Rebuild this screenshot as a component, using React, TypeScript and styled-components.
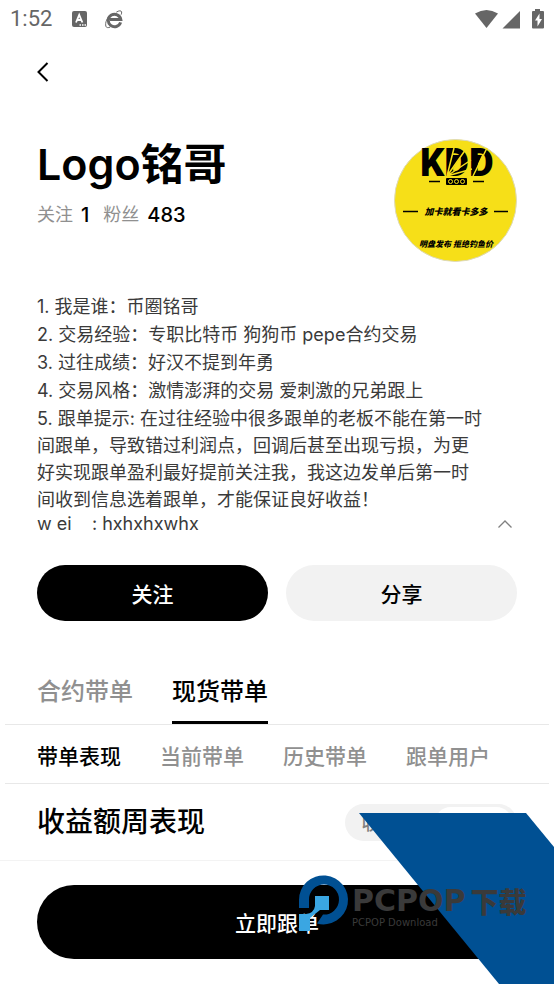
import React, { useState } from "react";
import styled, { createGlobalStyle } from "styled-components";

const GlobalStyle = createGlobalStyle`
  * { box-sizing: border-box; }
  body {
    margin: 0;
    background: #fff;
    color: #000;
    font-family: Inter, "Noto Sans CJK SC", sans-serif;
  }
  button { font: inherit; color: inherit; border: 0; padding: 0; background: none; cursor: pointer; }
  h1, h2, p { margin: 0; }
`;

const Page = styled.div`
  position: relative;
  display: flex;
  flex-direction: column;
  min-height: 100vh;
  overflow: hidden;
`;

const StatusBar = styled.header`
  display: flex;
  align-items: center;
  justify-content: space-between;
  height: 38px;
  padding: 0 9px 0 10px;
  color: #666;
`;

const StatusGroup = styled.div<{ $gap: number }>`
  display: flex;
  align-items: center;
  gap: ${(p) => p.$gap}px;
`;

const Clock = styled.time`
  font: 400 22px/26px Roboto, sans-serif;
`;

const NavBar = styled.nav`
  display: flex;
  align-items: center;
  height: 67px;
  padding: 0 31px;
`;

const BackButton = styled.button`
  display: grid;
  place-items: center;
  width: 24px;
  height: 36px;
`;

const Content = styled.main`
  flex: 1;
`;

const Profile = styled.section`
  display: flex;
  justify-content: space-between;
  padding: 34px 37px 0;
`;

const Name = styled.h1`
  font-size: 43px;
  line-height: 50px;
  font-weight: 600;
`;

const Stats = styled.div`
  display: flex;
  align-items: center;
  gap: 8px;
  margin-top: 12px;
  line-height: 28px;
`;

const StatLabel = styled.span`
  color: #909090;
  font-size: 18px;
`;

const StatValue = styled.span`
  margin-right: 6px;
  font-size: 20px;
  font-weight: 500;
`;

const Bio = styled.section`
  display: flex;
  align-items: flex-end;
  justify-content: space-between;
  padding: 31px 37px 0;
`;

const BioText = styled.div`
  display: flex;
  flex-direction: column;
  gap: 1px;
  max-width: 449px;
  color: #3a3a3a;
  font-size: 18px;
  line-height: 27px;
`;

const Contact = styled.p`
  margin-top: -4px;
  white-space: pre;
`;

const CollapseButton = styled.button`
  display: grid;
  place-items: center;
  width: 24px;
  height: 26px;
`;

const Actions = styled.div`
  display: grid;
  grid-template-columns: 1fr 1fr;
  gap: 18px;
  padding: 28px 37px 0;
`;

const PillButton = styled.button<{ $tone: "dark" | "light"; $tall?: boolean }>`
  width: 100%;
  height: ${(p) => (p.$tall ? 74 : 56)}px;
  border-radius: 40px;
  background: ${(p) => (p.$tone === "dark" ? "#000" : "#f2f2f2")};
  color: ${(p) => (p.$tone === "dark" ? "#fff" : "#000")};
  font-size: 21px;
  font-weight: 500;
`;

const TabRow = styled.div<{ $gap: number; $height: number }>`
  display: flex;
  gap: ${(p) => p.$gap}px;
  height: ${(p) => p.$height}px;
  margin: 0 5px;
  padding: 0 32px;
  border-bottom: 1px solid #e8e8e8;
`;

const MainTabs = styled(TabRow)`
  margin-top: 36px;
`;

const MainTab = styled.button<{ $active: boolean }>`
  border-bottom: 3px solid ${(p) => (p.$active ? "#000" : "transparent")};
  color: ${(p) => (p.$active ? "#000" : "#909090")};
  font-size: 24px;
  font-weight: 500;
  white-space: nowrap;
`;

const SubTab = styled.button<{ $active: boolean }>`
  padding-top: 2px;
  color: ${(p) => (p.$active ? "#000" : "#909090")};
  font-size: 21px;
  font-weight: 500;
  white-space: nowrap;
`;

const ChartHeader = styled.section`
  display: flex;
  align-items: center;
  justify-content: space-between;
  height: 76px;
  padding: 0 37px;
`;

const ChartTitle = styled.h2`
  font-size: 28px;
  line-height: 40px;
  font-weight: 500;
`;

const Segment = styled.div`
  display: flex;
  gap: 8px;
  height: 37px;
  width: 172px;
  padding: 3px 5px;
  border-radius: 19px;
  background: #f2f2f2;
`;

const SegmentButton = styled.button<{ $active: boolean }>`
  flex: 1;
  border-radius: 16px;
  background: ${(p) => (p.$active ? "#fff" : "transparent")};
  color: ${(p) => (p.$active ? "#000" : "#808080")};
  font-size: 18px;
  font-weight: 500;
`;

const Footer = styled.footer`
  padding: 24px 37px 25px;
  border-top: 1px solid #f3f3f3;
`;

const Watermark = styled.div`
  position: absolute;
  right: 0;
  bottom: 0;
  width: 256px;
  height: 171px;
  pointer-events: none;
`;

const WatermarkArt = styled.svg`
  display: block;
`;

const Brand = styled.div`
  position: absolute;
  left: 54px;
  top: 72px;
  color: #3a3a3a;
`;

const BrandName = styled.div`
  display: flex;
  align-items: center;
  gap: 5px;
  font: 700 30px/32px "DejaVu Sans", sans-serif;
  white-space: nowrap;
`;

const BrandSuffix = styled.span`
  font-family: "Noto Sans CJK SC", sans-serif;
  font-size: 28px;
  font-weight: 900;
`;

const BrandTagline = styled.div`
  font: 400 10px/12px "DejaVu Sans", sans-serif;
`;

function KeyboardIcon() {
  return (
    <svg width="15" height="16" viewBox="0 0 15 16" aria-hidden="true">
      <rect width="15" height="16" rx="2" fill="#666" />
      <path d="M4 11.5 7.2 3.8 10.4 11.5M5.2 9h4" fill="none" stroke="#fff" strokeWidth="1.8" />
      <path d="M7.5 14h1.5m1 0h1.5m1 0H14" stroke="#fff" strokeWidth="1.3" />
    </svg>
  );
}

function BrowserIcon() {
  return (
    <svg width="18" height="19" viewBox="0 0 18 19" aria-hidden="true" fill="none" stroke="#666">
      <path d="M15.600 12.400A6.300 6.300 0 1 1 15.800 9.400H5" strokeWidth="3" />
      <path d="M11.3 2.2C14 .4 16.2.5 16.6 1.800c.2.8 0 1.800-.5 2.900M5.800 4.200C2.200 7.500-.2 12.800.9 16.300c.5 1.600 2.400 1.600 4.300.8" strokeWidth="1" />
    </svg>
  );
}

function SignalIcons() {
  return (
    <svg width="70" height="21" viewBox="0 0 70 21" aria-hidden="true" fill="#666">
      <path d="M0 4.5Q11.5-2.5 23 4.5L11.5 19Z" />
      <path d="M45 2V19.500H27.500Z" />
      <path d="M60 0h5v2h3q1 0 1 1v15.500q0 1-1 1H58q-1 0-1-1V3q0-1 1-1h2Z" />
      <path d="M64.500 4.500 60 11.500h2.500V17.500L67 10h-2.500Z" fill="#fff" />
    </svg>
  );
}

function Avatar() {
  return (
    <svg width="123" height="123" viewBox="0 0 123 123" role="img" aria-label="Logo铭哥">
      <circle cx="61.500" cy="61.500" r="61" fill="#f6df18" stroke="#ddd9b8" strokeWidth="1" />
      <text x="26" y="37" fontFamily="Roboto, sans-serif" fontWeight="900" fontSize="38" fill="#000">
        KDD
      </text>
      <path d="M57 16V32L68 16ZM81 16V31L88 16Z" fill="#000" />
      <g stroke="#f6df18" strokeWidth="1.5">
        <path d="M53 37 60 9M53 37 72 10M53 37 77 21M53 37 78 30M79 37 93 9" />
      </g>
      <path d="M35 42.500h11M79 42.500h11M9 72.500h15M100 72.500h14" stroke="#000" strokeWidth="1.4" />
      <rect x="52" y="39" width="21" height="7" rx="1" fill="#000" />
      <g fill="none" stroke="#f6df18">
        <circle cx="56.500" cy="42.500" r="2" />
        <circle cx="62.500" cy="42.500" r="2" />
        <circle cx="68.500" cy="42.500" r="2" />
      </g>
      <g fontFamily="Noto Sans CJK SC, sans-serif" fontWeight="900" fontStyle="italic" textAnchor="middle" fill="#000">
        <text x="62" y="76" fontSize="9">加卡就看卡多多</text>
        <text x="62" y="108" fontSize="8">明盘发布 拒绝钓鱼价</text>
      </g>
    </svg>
  );
}

const mainTabs = ["合约带单", "现货带单"];
const subTabs = ["带单表现", "当前带单", "历史带单", "跟单用户"];
const measures = ["收益率", "收益额"];
const bio = [
  "1. 我是谁：币圈铭哥",
  "2. 交易经验：专职比特币 狗狗币 pepe合约交易",
  "3. 过往成绩：好汉不提到年勇",
  "4. 交易风格：激情澎湃的交易 爱刺激的兄弟跟上",
  "5. 跟单提示: 在过往经验中很多跟单的老板不能在第一时间跟单，导致错过利润点，回调后甚至出现亏损，为更好实现跟单盈利最好提前关注我，我这边发单后第一时间收到信息选着跟单，才能保证良好收益！",
];

export default function App() {
  const [mainTab, setMainTab] = useState("现货带单");
  const [subTab, setSubTab] = useState("带单表现");
  const [measure, setMeasure] = useState("收益额");

  return (
    <Page>
      <GlobalStyle />
      <StatusBar>
        <StatusGroup $gap={18}>
          <StatusGroup $gap={20}>
            <Clock>1:52</Clock>
            <KeyboardIcon />
          </StatusGroup>
          <BrowserIcon />
        </StatusGroup>
        <SignalIcons />
      </StatusBar>
      <NavBar>
        <BackButton aria-label="返回">
          <svg width="12" height="20" viewBox="0 0 12 20" aria-hidden="true">
            <path d="M10.500 1 1.500 10l9 9" fill="none" stroke="#000" strokeWidth="2" />
          </svg>
        </BackButton>
      </NavBar>
      <Content>
        <Profile>
          <div>
            <Name>Logo铭哥</Name>
            <Stats>
              <StatLabel>关注</StatLabel>
              <StatValue>1</StatValue>
              <StatLabel>粉丝</StatLabel>
              <StatValue>483</StatValue>
            </Stats>
          </div>
          <Avatar />
        </Profile>
        <Bio>
          <BioText>
            {bio.map((line) => (
              <p key={line}>{line}</p>
            ))}
            <Contact>{"w ei    : hxhxhxwhx"}</Contact>
          </BioText>
          <CollapseButton aria-label="收起">
            <svg width="14" height="8" viewBox="0 0 14 8" aria-hidden="true">
              <path d="M.5 7.500 7 1l6.500 6.500" fill="none" stroke="#808080" strokeWidth="1.3" />
            </svg>
          </CollapseButton>
        </Bio>
        <Actions>
          <PillButton $tone="dark">关注</PillButton>
          <PillButton $tone="light">分享</PillButton>
        </Actions>
        <MainTabs $gap={39} $height={68} role="tablist">
          {mainTabs.map((tab) => (
            <MainTab key={tab} role="tab" aria-selected={tab === mainTab} $active={tab === mainTab} onClick={() => setMainTab(tab)}>
              {tab}
            </MainTab>
          ))}
        </MainTabs>
        <TabRow $gap={39} $height={59} role="tablist">
          {subTabs.map((tab) => (
            <SubTab key={tab} role="tab" aria-selected={tab === subTab} $active={tab === subTab} onClick={() => setSubTab(tab)}>
              {tab}
            </SubTab>
          ))}
        </TabRow>
        <ChartHeader>
          <ChartTitle>收益额周表现</ChartTitle>
          <Segment>
            {measures.map((item) => (
              <SegmentButton key={item} aria-pressed={item === measure} $active={item === measure} onClick={() => setMeasure(item)}>
                {item}
              </SegmentButton>
            ))}
          </Segment>
        </ChartHeader>
      </Content>
      <Footer>
        <PillButton $tone="dark" $tall>
          立即跟单
        </PillButton>
      </Footer>
      <Watermark>
        <WatermarkArt width="256" height="171" viewBox="0 0 256 171" aria-hidden="true">
          <path d="M61 0H228L256 34V171H201Z" fill="#005093" />
          <path d="M1 95V87A24.500 24.500 0 1 1 19 110.500L25 101.500A15 15 0 1 0 11 87V95Z" fill="#005093" />
          <path d="M17 83H31V97H22L12 105V118H1V101H8Q16 100 17 93Z" fill="#3aa6e2" />
        </WatermarkArt>
        <Brand>
          <BrandName>
            PCPOP<BrandSuffix>下载</BrandSuffix>
          </BrandName>
          <BrandTagline>PCPOP Download</BrandTagline>
        </Brand>
      </Watermark>
    </Page>
  );
}
